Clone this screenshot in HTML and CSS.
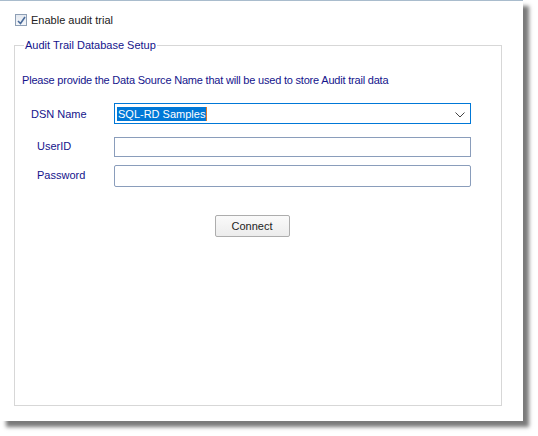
FILE: index.html
```html
<!DOCTYPE html>
<html lang="en">
<head>
    <meta charset="UTF-8">
    <title>Audit Trail</title>
    <link rel="stylesheet" href="styles.css">
</head>
<body>
    <div class="window">
        <label class="enable">
            <span class="chk">
                <svg width="9" height="9" viewBox="0 0 9 9"><path d="M1 5 L3.5 7.5 L8 1" fill="none" stroke="#4a6b9a" stroke-width="1.6"/></svg>
            </span>
            Enable audit trial
        </label>

        <fieldset class="group">
            <legend>Audit Trail Database Setup</legend>
            <p class="intro">Please provide the Data Source Name that will be used to store Audit trail data</p>

            <div class="row dsn">
                <span class="lbl">DSN Name</span>
                <div class="select">
                    <span class="sel">SQL-RD Samples</span><span class="caret"></span>
                    <svg class="chev" width="10" height="6" viewBox="0 0 10 6"><path d="M0.5 0.5 L5 5 L9.5 0.5" fill="none" stroke="#444" stroke-width="1"/></svg>
                </div>
            </div>
            <div class="row user">
                <span class="lbl lbl2">UserID</span>
                <div class="input"></div>
            </div>
            <div class="row pass">
                <span class="lbl lbl2">Password</span>
                <div class="input round"></div>
            </div>

            <div class="actions">
                <button class="btn">Connect</button>
            </div>
        </fieldset>
    </div>
</body>
</html>
```

FILE: styles.css
```css
* {box-sizing: border-box;}
body {margin: 0; padding-bottom: 15px; background: #fff; font-family: Tahoma, "Liberation Sans", Arial, sans-serif; font-size: 11px;}

/* 창 */
.window {width: 523px; height: 421px; background: #fff; border-top: 1px solid #a9bccd; box-shadow: 6px 6px 4px #7a7a7a; padding: 12px 0 0 15px; position: relative;}

/* 체크박스 */
.enable {display: flex; align-items: center; gap: 4px; color: #222; height: 14px;}
.chk {width: 12px; height: 12px; border: 1px solid #8e9fb5; background: linear-gradient(#e4e9f0, #f4f6f9); display: flex; align-items: center; justify-content: center;}

/* 그룹 박스 */
.group {margin: 17px 0 0 -1px; width: 488px; height: 367px; border: 1px solid #d7d7d7; padding: 0 0 0 7px; position: relative; top: -5px;}
.group legend {color: #14148c; padding: 0 1px; margin-left: 2px;}
.intro {color: #14148c; margin: 23px 0 0 0; letter-spacing: -0.2px;}

.row {display: flex; align-items: center;}
.lbl {width: 92px; padding-left: 9px; color: #14148c;}
.lbl2 {padding-left: 15px;}
.dsn {margin-top: 17px; height: 21px;}
.user {margin-top: 13px; height: 20px;}
.pass {margin-top: 8px; height: 22px;}
.user .lbl, .pass .lbl {margin-top: -2px;}

.select {width: 357px; height: 21px; border: 1px solid #0078d7; display: flex; align-items: center; padding-left: 2px; position: relative;}
.sel {background: #0078d7; color: #fff; padding: 0 1px; line-height: 14px;}
.caret {width: 1px; height: 14px; background: #e07a2a;}
.chev {position: absolute; right: 5px; top: 8px;}

.input {width: 357px; height: 20px; border: 1px solid #8a9dbb;}
.round {height: 22px; border-radius: 2px;}

.actions {display: flex; justify-content: center; margin-top: 28px; padding-right: 19px;}
.btn {width: 75px; height: 22px; border: 1px solid #adadad; border-radius: 2px; background: linear-gradient(#fafafa, #ececec); font: inherit; color: #222; padding: 0;}
```
